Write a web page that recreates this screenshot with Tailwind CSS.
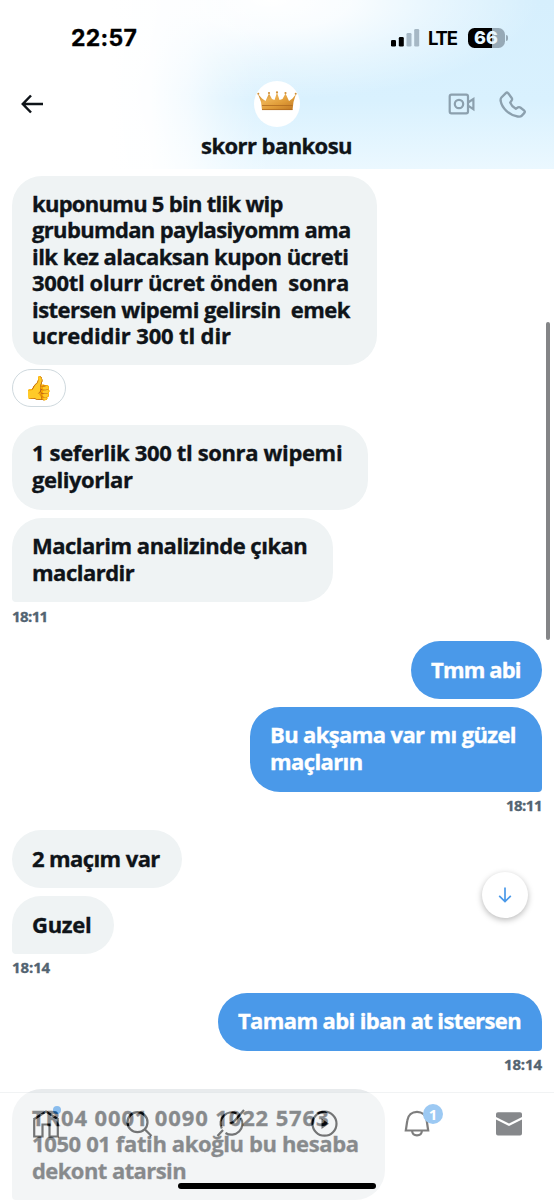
<!DOCTYPE html>
<html lang="tr">
<head>
<meta charset="utf-8">
<title>skorr bankosu</title>
<script src="https://cdn.jsdelivr.net/npm/@tailwindcss/browser@4"></script>
</head>
<body class="bg-white">
<div class="relative flex h-[1200px] w-[554px] flex-col overflow-hidden bg-white font-['Open_Sans',sans-serif] text-[22px] font-bold leading-[26.5px] text-[#0f1419]">

  <header class="flex h-[169px] shrink-0 flex-col bg-[linear-gradient(90deg,#fff_20%,#fffffff2_27%,#ffffffb3_34%,#ffffff59_40%,#ffffff1a_46%,#ffffff00_52%),radial-gradient(ellipse_270px_100px_at_270px_0px,#fff_0%,#ffffffd9_30%,#ffffff73_60%,#ffffff00_100%),linear-gradient(180deg,#d6effd_0%,#d9f1fe_60%,#ebf8ff_100%)]">
    <!-- status bar -->
    <div class="flex h-[76px] items-center justify-between pl-[71px] pr-[46px] font-[Inter,sans-serif] text-black">
      <span class="text-[23px] tracking-[0.3px] [-webkit-text-stroke:0.3px]">22:57</span>
      <div class="flex items-center">
        <svg class="h-[18px] w-[29px]" viewBox="0 0 29 18"><rect x="0" y="11" width="5" height="6.5" rx="1.3"/><rect x="7.8" y="8" width="5" height="9.5" rx="1.3"/><g fill="#a6b8c5"><rect x="15.5" y="4" width="5" height="13.500" rx="1.300"/><rect x="23.2" y="0" width="5" height="17.500" rx="1.300"/></g></svg>
        <span class="ml-[8px] w-[30px] text-[18.5px] tracking-[-1.2px]">LTE</span>
        <div class="ml-[10px] flex h-[20px] w-[37px] items-center justify-center rounded-[6.5px] bg-[linear-gradient(90deg,#000_66%,#96a9b6_66%)] pr-[1px] text-[18px] font-extrabold leading-none text-[#e6f6ff]">66</div>
        <div class="ml-[1px] h-[6px] w-[2px] rounded-r-full bg-[#96a9b6]"></div>
      </div>
    </div>
    <!-- navigation row -->
    <div class="grid h-[56px] grid-cols-3 items-center pl-[21px] pr-[28px]">
      <svg class="h-[20px] w-[23px]" viewBox="0 0 23 20" fill="none" stroke="#0f1419" stroke-width="2.500"><path d="M22 10H2M10 1.500L1.800 10L10 18.500"/></svg>
      <div class="flex justify-center pl-[7px]">
        <div class="flex size-[46px] items-center justify-center rounded-full bg-white pb-[7px]">
          <svg class="h-[20px] w-[40px]" viewBox="0 0 40 20"><defs><linearGradient id="gold" x1="0" x2="1" y1="0" y2="1"><stop offset="0" stop-color="#c8842a"/><stop offset=".35" stop-color="#ecb050"/><stop offset=".6" stop-color="#e09c38"/><stop offset="1" stop-color="#bd7420"/></linearGradient></defs><path fill="url(#gold)" d="M1 3L5 7.500L8.500 10L12 2.500L15 8L17.500 9L20 1.500L22.500 9L25.500 8L28.500 2.500L32 10L35.500 7.500L39 3L36.500 11L35.500 19H5L4 11Z"/><path fill="none" stroke="#ae6a20" stroke-width=".8" d="M5 14.500H35.500M5 18.600H35.500"/><g fill="#d08e34"><circle cx="1.300" cy="2.800" r="1"/><circle cx="12" cy="2" r="1.100"/><circle cx="20" cy="1.300" r="1.100"/><circle cx="28.500" cy="2" r="1.100"/><circle cx="38.700" cy="2.800" r="1"/></g></svg>
        </div>
      </div>
      <div class="flex items-center justify-end gap-[24px] text-[#8ca0ae]">
        <svg class="h-[22px] w-[27px]" viewBox="0 0 27 22" fill="none" stroke="currentColor" stroke-width="2.200"><rect x="1.700" y="1.600" width="18.300" height="18.800" rx="1.800"/><circle cx="11" cy="11" r="4.200"/><path d="M20 9.500L25.400 6V16.200L20 12.700"/></svg>
        <svg class="h-[28px] w-[27px]" viewBox="0 0 27 28" fill="none" stroke="currentColor" stroke-width="2.300" stroke-linejoin="round"><path d="M2.400 7.500L6.800 3.100Q8 2 9.200 3.200L12.700 8Q13.500 9.100 12.700 10.300L11.200 12.600Q12.700 16.500 16.800 18.800L19.200 17.300Q20.200 16.700 21.300 17.500L25.300 20.700Q26.300 21.700 25.400 22.900L22.600 25.900Q21.600 27 18.600 26.500C10 25.300 2.900 18 1.600 10.800Q1.400 8.500 2.400 7.500Z"/></svg>
      </div>
    </div>
    <div class="pr-px text-center tracking-[-0.57px] [-webkit-text-stroke:0.35px]">skorr bankosu</div>
  </header>

  <main class="flex flex-col items-start whitespace-nowrap px-[12px] pt-[7px] [-webkit-text-stroke:0.35px]">
    <div class="h-[189px] w-[365px] rounded-[30px] bg-[#eff3f4] px-[20px] pt-[13.500px]">
      <div class="tracking-[-0.72px]">kuponumu 5 bin tlik wip</div>
      <div class="tracking-[-0.65px]">grubumdan paylasiyomm ama</div>
      <div class="tracking-[-0.54px]">ilk kez alacaksan kupon ücreti</div>
      <div class="tracking-[-0.35px]">300tl olurr ücret önden&nbsp; sonra</div>
      <div class="tracking-[-0.55px]">istersen wipemi gelirsin&nbsp; emek</div>
      <div class="tracking-[-0.15px]">ucredidir 300 tl dir</div>
    </div>
    <div class="mt-[4px] flex h-[38px] w-[54px] items-center justify-center rounded-full border border-[#cfd9de] pb-[2px] pr-[2px] text-[23px] font-normal">👍</div>
    <div class="mt-[18px] h-[85px] w-[356px] rounded-[30px] bg-[#eff3f4] px-[20px] pt-[14px]">
      <div class="tracking-[-0.35px]">1 seferlik 300 tl sonra wipemi</div>
      <div class="tracking-[-0.45px]">geliyorlar</div>
    </div>
    <div class="mt-[8px] h-[84px] w-[321px] rounded-[30px] rounded-bl-[4px] bg-[#eff3f4] px-[20px] pt-[14px]">
      <div class="tracking-[-0.5px]">Maclarim analizinde çıkan</div>
      <div class="tracking-[-0.5px]">maclardir</div>
    </div>
    <div class="mt-[4px] h-[20px] text-[15px] leading-[20px] tracking-[-0.6px] text-[#536471]">18:11</div>

    <div class="mt-[15px] h-[58px] w-[131.500px] self-end rounded-[29px] bg-[#4a99e9] px-[20.500px] pt-[15px] tracking-[-0.85px] text-white">Tmm abi</div>
    <div class="mt-[8px] h-[85px] w-[292.500px] self-end rounded-[30px] rounded-br-[4px] bg-[#4a99e9] px-[20.500px] pt-[14px] text-white">
      <div class="tracking-[-0.62px]">Bu akşama var mı güzel</div>
      <div class="tracking-[-0.6px]">maçların</div>
    </div>
    <div class="mt-[3px] h-[20px] self-end text-[15px] leading-[20px] tracking-[-0.5px] text-[#536471]">18:11</div>

    <div class="mt-[15px] h-[58px] w-[169.500px] rounded-[29px] bg-[#eff3f4] px-[20px] pt-[15px] tracking-[-0.6px]">2 maçım var</div>
    <div class="mt-[8px] h-[58px] w-[101.500px] rounded-[29px] rounded-bl-[4px] bg-[#eff3f4] px-[20px] pt-[15px] tracking-[-0.3px]">Guzel</div>
    <div class="mt-[3px] h-[20px] text-[15px] leading-[20px] tracking-[-0.1px] text-[#536471]">18:14</div>

    <div class="mt-[16px] h-[58px] w-[324.500px] self-end rounded-[29px] rounded-br-[4px] bg-[#4a99e9] px-[20.500px] pt-[14px] tracking-[-0.62px] text-white">Tamam abi iban at istersen</div>
    <div class="mt-[3px] h-[20px] self-end text-[15px] leading-[20px] tracking-[-0.1px] text-[#536471]">18:14</div>

    <div class="mt-[15px] h-[111px] w-[373px] rounded-[30px] rounded-bl-[4px] bg-[#e8ebed] px-[20px] pt-[14.500px]">
      <div class="tracking-[0.87px]">TR04 0001 0090 1022 5763</div>
      <div class="tracking-[-0.38px]">1050 01 fatih akoğlu bu hesaba</div>
      <div class="tracking-[-0.57px]">dekont atarsin</div>
    </div>
  </main>

  <!-- scroll thumb -->
  <div class="absolute left-[546px] top-[322px] h-[318px] w-[4px] rounded-full bg-[#848587]"></div>

  <!-- jump to latest -->
  <div class="absolute left-[482px] top-[872px] flex size-[46px] items-center justify-center rounded-full bg-white shadow-[0_2px_6px_rgba(0,0,0,0.28)]">
    <svg class="size-[16px]" viewBox="0 0 16 16" fill="none" stroke="#4a99e9" stroke-width="1.700"><path d="M8 .5V14.500M2.200 8.800L8 14.600L13.800 8.800"/></svg>
  </div>

  <!-- translucent tab bar -->
  <nav class="absolute bottom-0 left-0 grid h-[108px] w-[555px] grid-cols-6 items-start border-t border-[#e4e8eb] bg-white pt-[16px] opacity-50">
    <div class="relative flex justify-center">
      <svg class="h-[30px] w-[28px]" viewBox="0 0 28 30" fill="none" stroke="#000" stroke-width="2.200"><path d="M1.500 10.500L14 2.500L26.500 10.500M2.200 10.500V27.500H10.500V15.500H17.500V27.500H25.800V10.500"/></svg>
      <span class="absolute left-[53px] top-[-3px] size-[8px] rounded-full bg-[#2d8fee]"></span>
    </div>
    <div class="flex justify-center"><svg class="h-[30px] w-[28px]" viewBox="0 0 28 30" fill="none" stroke="#000" stroke-width="2.200"><circle cx="12.500" cy="13.200" r="10"/><path d="M19.700 20.300L26.500 27"/></svg></div>
    <div class="flex justify-center"><svg class="h-[30px] w-[30px]" viewBox="0 0 30 30" fill="none" stroke="#000" stroke-width="2.200"><path d="M20.500 4.600A11 11 0 0 0 5.800 19.500M24.800 9A11 11 0 0 1 9.500 24M28 1L17.500 13L13.500 14.500M7 21L1.500 27"/></svg></div>
    <div class="flex justify-center"><svg class="h-[30px] w-[28px]" viewBox="0 0 28 30"><circle cx="14.500" cy="14.700" r="12" fill="none" stroke="#000" stroke-width="2.200"/><path d="M11.500 9.500V20L19 14.700Z"/></svg></div>
    <div class="relative flex justify-center pl-[2px]">
      <svg class="h-[30px] w-[28px]" viewBox="0 0 28 30" fill="none" stroke="#000" stroke-width="2.200"><path d="M2.800 21.500L4.300 11.500C5 6 9 2.800 14 2.800S23 6 23.700 11.500L25.200 21.500ZM9 21.500C9.500 28 18.500 28 19 21.500"/></svg>
      <span class="absolute left-[53px] top-[-5px] flex size-[20px] items-center justify-center rounded-full bg-[#3b94e8] text-[15px] leading-none text-white">1</span>
    </div>
    <div class="flex justify-center"><svg class="h-[30px] w-[28px]" viewBox="0 0 28 30" fill="#0f1419"><path d="M1 5Q1 3.200 3 3.200H25Q27 3.200 27 5V8L14 14.500L1 8ZM1 10.500L14 17L27 10.500V24.500Q27 26.500 25 26.500H3Q1 26.500 1 24.500Z"/></svg></div>
  </nav>

  <!-- home indicator -->
  <div class="absolute left-[178px] top-[1183px] h-[6px] w-[198px] rounded-full bg-black"></div>
</div>
</body>
</html>
